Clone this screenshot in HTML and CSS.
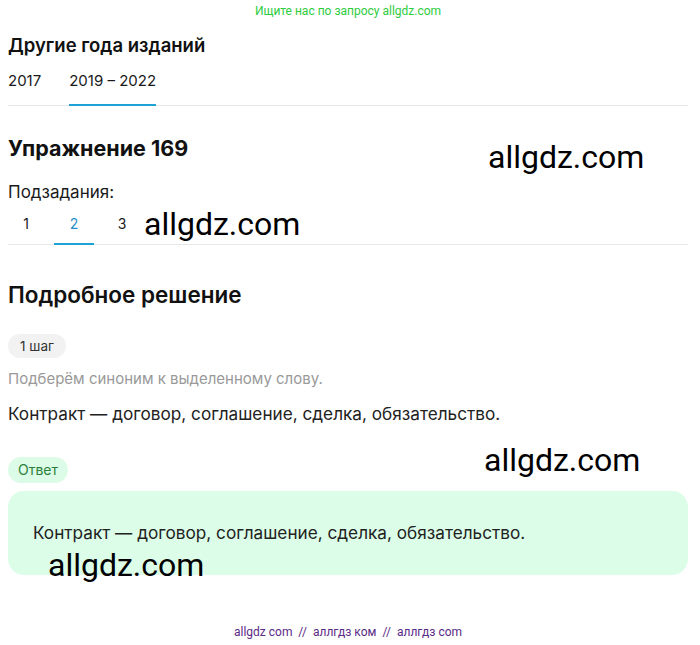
FILE: index.html
```html
<!DOCTYPE html>
<html lang="ru">
<head>
<meta charset="utf-8">
<link rel="stylesheet" href="styles.css">
</head>
<body>
<div class="page">
  <div class="promo">Ищите нас по запросу allgdz.com</div>
  <h2 class="years-title">Другие года изданий</h2>
  <div class="tabs years">
    <span class="tab">2017</span>
    <span class="tab active">2019 – 2022</span>
  </div>
  <h1 class="ex-title">Упражнение 169</h1>
  <div class="sub-label">Подзадания:</div>
  <div class="tabs subs">
    <span class="tab">1</span>
    <span class="tab active">2</span>
    <span class="tab">3</span>
  </div>
  <h2 class="sol-title">Подробное решение</h2>
  <span class="pill step">1 шаг</span>
  <p class="hint">Подберём синоним к выделенному слову.</p>
  <p class="text main">Контракт — договор, соглашение, сделка, обязательство.</p>
  <span class="pill answer">Ответ</span>
  <div class="answer-box">
    <p class="text">Контракт — договор, соглашение, сделка, обязательство.</p>
  </div>
  <div class="footer">allgdz com &nbsp;//&nbsp; аллгдз ком &nbsp;//&nbsp; аллгдз com</div>

  <div class="wm wm1">allgdz.com</div>
  <div class="wm wm2">allgdz.com</div>
  <div class="wm wm3">allgdz.com</div>
  <div class="wm wm4">allgdz.com</div>
</div>
</body>
</html>
```
FILE: styles.css
```css
* { box-sizing: border-box; }
html, body { margin: 0; padding: 0; background: #fff; }
body {
  font-family: Inter, Roboto, "Noto Sans", sans-serif;
  color: #1a1a1a;
}
.page {
  position: relative;
  width: 700px;
  padding: 0 12px 1px 8px;
}
.promo {
  font-family: Roboto, sans-serif;
  font-size: 12px;
  line-height: 16px;
  color: #2ecc40;
  text-align: center;
  padding-top: 3px;
}
.years-title {
  margin: 14px 0 0;
  font-size: 18.5px;
  line-height: 24px;
  font-weight: 600;
  color: #111;
}
.tabs {
  display: flex;
  border-bottom: 1px solid #e8e8e8;
}
.tab {
  font-size: 15px;
  line-height: 20px;
  color: #1a1a1a;
  border-bottom: 2px solid transparent;
  margin-bottom: -1px;
}
.years { margin-top: 14px; }
.years .tab { padding: 0 0 13px; margin-right: 28px; }
.tab.active { border-bottom-color: #1fa2d6; }
.subs .tab.active { color: #1f8fc8; }
.ex-title {
  margin: 28px 0 0;
  font-size: 21.5px;
  line-height: 28px;
  font-weight: 700;
  color: #111;
}
.sub-label {
  margin-top: 19px;
  font-size: 17px;
  line-height: 22px;
}
.subs { margin-top: 11px; }
.subs .tab {
  width: 40px;
  text-align: center;
  font-size: 14px;
  padding-bottom: 9px;
}
.subs .tab:first-child { margin-left: -2px; }
.subs .tab + .tab { margin-left: 8px; }
.sol-title {
  margin: 36px 0 0;
  font-size: 22.5px;
  line-height: 28px;
  font-weight: 600;
  color: #111;
}
.pill {
  display: block;
  width: fit-content;
  border-radius: 13px;
}
.step {
  margin-top: 25px;
  height: 24px;
  line-height: 24px;
  padding: 0 12px;
  font-size: 13.5px;
  background: #f2f2f3;
  color: #333;
}
.hint {
  margin: 11px 0 0;
  font-size: 15px;
  line-height: 20px;
  color: #999;
}
.text {
  margin: 0;
  font-size: 17.2px;
  line-height: 22px;
  color: #222;
}
.main { margin-top: 14px; }
.answer {
  margin-top: 32px;
  height: 26px;
  line-height: 26px;
  padding: 0 10px;
  font-size: 14px;
  background: #dcfce7;
  color: #2a7f3a;
}
.answer-box {
  margin-top: 8px;
  background: #dcfee8;
  border-radius: 16px;
  height: 84px;
  padding: 31px 25px 0;
}
.footer {
  margin-top: 49px;
  text-align: center;
  font-family: Roboto, sans-serif;
  font-size: 12px;
  line-height: 16px;
  color: #5b2a86;
}
.wm {
  position: absolute;
  font-family: Roboto, "Liberation Sans", sans-serif;
  font-size: 32px;
  line-height: 36px;
  color: #000;
  white-space: nowrap;
}
.wm1 { left: 488px; top: 139px; }
.wm2 { left: 144px; top: 206px; }
.wm3 { left: 484px; top: 442px; }
.wm4 { left: 48px; top: 547px; }
```
